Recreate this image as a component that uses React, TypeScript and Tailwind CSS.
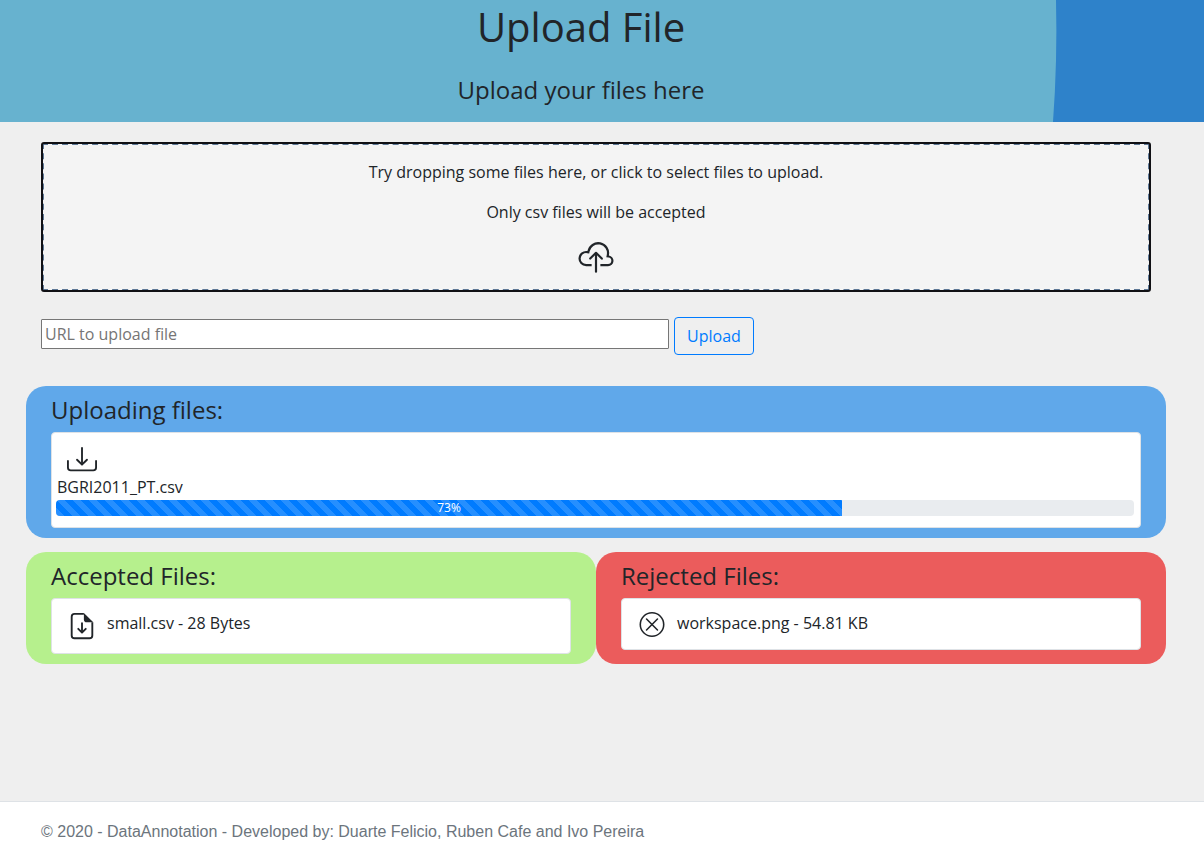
import React from 'react';

function Icon({ className, paths }: { className: string; paths: string[] }) {
  return (
    <svg className={className} viewBox="0 0 16 16" fill="currentColor" fillRule="evenodd" clipRule="evenodd" aria-hidden="true">
      {paths.map((d) => (
        <path key={d} d={d} fillRule="evenodd" />
      ))}
    </svg>
  );
}

const cloudUpload = [
  'M4.887 6.2l-.964-.165A2.5 2.5 0 103.5 11H6v1H3.5a3.5 3.5 0 11.59-6.95 5.002 5.002 0 119.804 1.98A2.501 2.501 0 0113.5 12H10v-1h3.5a1.5 1.5 0 00.237-2.981L12.7 7.854l.216-1.028a4 4 0 10-7.843-1.587l-.185.96z',
  'M5 8.854a.5.5 0 00.707 0L8 6.56l2.293 2.293A.5.5 0 1011 8.146L8.354 5.5a.5.5 0 00-.708 0L5 8.146a.5.5 0 000 .708z',
  'M8 6a.5.5 0 01.5.5v8a.5.5 0 01-1 0v-8A.5.5 0 018 6z',
];
const download = [
  'M.5 8a.5.5 0 01.5.5V12a1 1 0 001 1h12a1 1 0 001-1V8.5a.5.5 0 011 0V12a2 2 0 01-2 2H2a2 2 0 01-2-2V8.5A.5.5 0 01.5 8z',
  'M5 7.5a.5.5 0 01.707 0L8 9.793 10.293 7.5a.5.5 0 11.707.707l-2.646 2.647a.5.5 0 01-.708 0L5 8.207A.5.5 0 015 7.5z',
  'M8 1a.5.5 0 01.5.5v8a.5.5 0 01-1 0v-8A.5.5 0 018 1z',
];
const fileDown = [
  'M4 1h5v1H4a1 1 0 00-1 1v10a1 1 0 001 1h8a1 1 0 001-1V6h1v7a2 2 0 01-2 2H4a2 2 0 01-2-2V3a2 2 0 012-2z',
  'M9 4.5V1l5 5h-3.5A1.5 1.5 0 019 4.5z',
  'M5.646 9.146a.5.5 0 01.708 0L8 10.793l1.646-1.647a.5.5 0 01.708.708l-2 2a.5.5 0 01-.708 0l-2-2a.5.5 0 010-.708z',
  'M8 6a.5.5 0 01.5.5v4a.5.5 0 01-1 0v-4A.5.5 0 018 6z',
];
const xCircle = [
  'M8 15A7 7 0 108 1a7 7 0 000 14zm0 1A8 8 0 108 0a8 8 0 000 16z',
  'M11.854 4.146a.5.5 0 010 .708l-7 7a.5.5 0 01-.708-.708l7-7a.5.5 0 01.708 0z',
  'M4.146 4.146a.5.5 0 000 .708l7 7a.5.5 0 00.708-.708l-7-7a.5.5 0 00-.708 0z',
];

function Header() {
  return (
    <header className="relative h-[122px] overflow-hidden bg-[#67b2cf] pr-[42px] text-center">
      <svg className="absolute inset-y-0 right-0 h-[122px] w-[154px]" viewBox="0 0 154 122" aria-hidden="true">
        <path d="M6 0Q7.5 61 3 122H154V0Z" fill="#2e82ca" />
      </svg>
      <h1 className="relative pt-[3px] text-[40px] leading-[48px]">Upload File</h1>
      <p className="relative mt-6 text-2xl leading-[29px]">Upload your files here</p>
    </header>
  );
}

export default function App() {
  const progress = 73;
  return (
    <div className="flex h-[862px] w-full flex-col overflow-hidden bg-[#efefef] font-['Open_Sans',sans-serif] text-base leading-6 text-[#212529]">
      <Header />
      <main className="flex-1 px-[26px] pr-[38px] pt-[21px]">
        <section className="mx-4 flex h-[148px] flex-col items-center rounded-[2px] border-2 border-dashed border-[#5d7795] bg-[#f4f4f4] pt-[15px] outline-2 -outline-offset-1 outline-[#101014]">
          <p>Try dropping some files here, or click to select files to upload.</p>
          <p className="mt-4">Only csv files will be accepted</p>
          <Icon className="mt-4 h-[35px] w-9" paths={cloudUpload} />
        </section>

        <form className="mt-[26px] flex h-[38px] items-start pl-[15px]">
          <input
            className="mt-[2px] h-[30px] w-[628px] rounded-[1px] border border-[#767676] bg-white px-[3px] pb-px placeholder:text-[#757575]"
            placeholder="URL to upload file"
          />
          <button type="button" className="ml-[5px] h-[38px] w-20 rounded border border-[#007bff] text-[#007bff]">
            Upload
          </button>
        </form>

        <section className="mt-[31px] h-[152px] rounded-[20px] bg-[#60a8ea] px-[25px] pt-[9px]">
          <h2 className="text-2xl leading-[29px]">Uploading files:</h2>
          <div className="mt-2 h-24 rounded border border-[#dee2e6] bg-white pt-3 pr-[6px] pl-1">
            <Icon className="ml-[11px] size-[30px]" paths={download} />
            <p className="ml-px">BGRI2011_PT.csv</p>
            <div className="mt-px flex h-4 overflow-hidden rounded bg-[#e9ecef] text-xs">
              <div
                className="flex items-center justify-center bg-[#007bff] bg-[linear-gradient(45deg,rgba(255,255,255,.15)_25%,transparent_25%,transparent_50%,rgba(255,255,255,.15)_50%,rgba(255,255,255,.15)_75%,transparent_75%,transparent)] bg-[length:16px_16px] text-white"
                style={{ width: `calc(${progress}% - 1px)` }}
              >
                {progress}%
              </div>
            </div>
          </div>
        </section>

        <div className="mt-[14px] grid h-28 grid-cols-2">
          <section className="rounded-[20px] bg-[#b6f08d] px-[25px] pt-[9px]">
            <h2 className="text-2xl leading-[29px]">Accepted Files:</h2>
            <div className="mt-2 flex h-14 rounded border border-[#dee2e6] bg-white pt-3 pl-[15px]">
              <Icon className="size-[30px]" paths={fileDown} />
              <span className="ml-[10px]">small.csv - 28 Bytes</span>
            </div>
          </section>
          <section className="rounded-[20px] bg-[#eb5c5c] px-[25px] pt-[9px]">
            <h2 className="text-2xl leading-[29px]">Rejected Files:</h2>
            <div className="mt-2 flex h-[52px] rounded border border-[#dee2e6] bg-white pt-3 pl-[17px]">
              <Icon className="mt-[1px] h-[25px] w-[26px]" paths={xCircle} />
              <span className="ml-3">workspace.png - 54.81 KB</span>
            </div>
          </section>
        </div>
      </main>
      <footer className="h-[61px] border-t border-[#dee2e6] bg-white pl-[41px] font-['Liberation_Sans',sans-serif] leading-[60px] text-[#6c757d]">
        © 2020 - DataAnnotation - Developed by: Duarte Felicio, Ruben Cafe and Ivo Pereira
      </footer>
    </div>
  );
}
